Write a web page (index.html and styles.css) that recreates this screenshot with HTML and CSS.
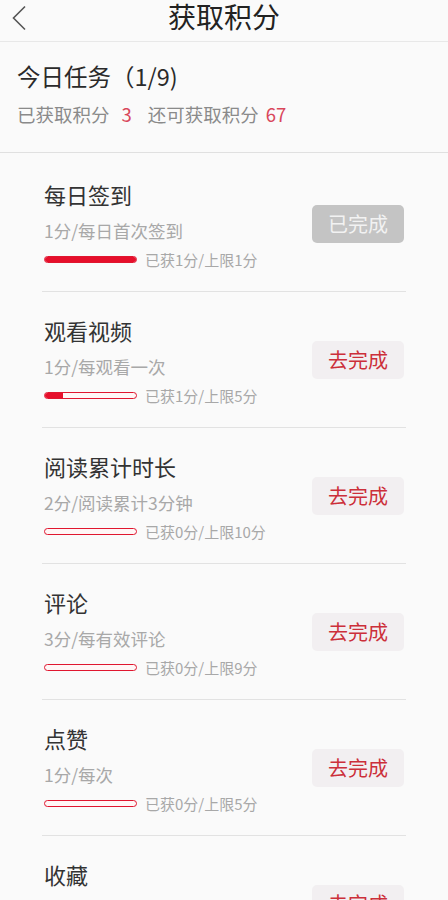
FILE: index.html
```html
<!DOCTYPE html>
<html>
<head>
    <meta charset="utf-8">
    <title>获取积分</title>
    <link rel="stylesheet" href="styles.css">
</head>
<body>
<div class="header">
    <svg class="back" width="16" height="26" viewBox="0 0 16 26">
        <path d="M14 1.5 L2.5 13 L14 24.5" fill="none" stroke="#555" stroke-width="1.6"/>
    </svg>
    <h1>获取积分</h1>
</div>

<div class="summary">
    <div class="summary-title">今日任务（1/9)</div>
    <div class="summary-sub">
        <span>已获取积分</span><span class="num">3</span>
        <span class="second">还可获取积分</span><span class="num tight">67</span>
    </div>
</div>

<div class="tasks">
    <div class="task">
        <div class="task-info">
            <div class="task-name">每日签到</div>
            <div class="task-rule">1分/每日首次签到</div>
            <div class="task-progress">
                <div class="bar"><div class="fill" style="width:100%"></div></div>
                <span class="bar-text">已获1分/上限1分</span>
            </div>
        </div>
        <button class="btn done">已完成</button>
    </div>
    <div class="task">
        <div class="task-info">
            <div class="task-name">观看视频</div>
            <div class="task-rule">1分/每观看一次</div>
            <div class="task-progress">
                <div class="bar"><div class="fill" style="width:20%"></div></div>
                <span class="bar-text">已获1分/上限5分</span>
            </div>
        </div>
        <button class="btn">去完成</button>
    </div>
    <div class="task">
        <div class="task-info">
            <div class="task-name">阅读累计时长</div>
            <div class="task-rule">2分/阅读累计3分钟</div>
            <div class="task-progress">
                <div class="bar"><div class="fill" style="width:0%"></div></div>
                <span class="bar-text">已获0分/上限10分</span>
            </div>
        </div>
        <button class="btn">去完成</button>
    </div>
    <div class="task">
        <div class="task-info">
            <div class="task-name">评论</div>
            <div class="task-rule">3分/每有效评论</div>
            <div class="task-progress">
                <div class="bar"><div class="fill" style="width:0%"></div></div>
                <span class="bar-text">已获0分/上限9分</span>
            </div>
        </div>
        <button class="btn">去完成</button>
    </div>
    <div class="task">
        <div class="task-info">
            <div class="task-name">点赞</div>
            <div class="task-rule">1分/每次</div>
            <div class="task-progress">
                <div class="bar"><div class="fill" style="width:0%"></div></div>
                <span class="bar-text">已获0分/上限5分</span>
            </div>
        </div>
        <button class="btn">去完成</button>
    </div>
    <div class="task">
        <div class="task-info">
            <div class="task-name">收藏</div>
            <div class="task-rule">1分/每次收藏</div>
            <div class="task-progress">
                <div class="bar"><div class="fill" style="width:0%"></div></div>
                <span class="bar-text">已获0分/上限5分</span>
            </div>
        </div>
        <button class="btn">去完成</button>
    </div>
</div>
</body>
</html>
```

FILE: styles.css
```css
body {
    margin: 0;
    background-color: #fafafa;
    font-family: "Noto Sans CJK SC", "Noto Sans", sans-serif;
    color: #333;
    width: 448px;
    overflow: hidden;
}
.header {
    height: 41px;
    border-bottom: 1px solid #e8e8e8;
    display: flex;
    justify-content: center;
    position: relative;
}
.back {
    position: absolute;
    left: 11px;
    top: 5px;
}
.header h1 {
    margin: 0;
    font-size: 28px;
    font-weight: normal;
    line-height: 33px;
    color: #222;
}
.summary {
    padding: 18px 17px 25px;
    border-bottom: 1px solid #e0e0e0;
}
.summary-title {
    font-size: 23.5px;
    line-height: 32px;
    color: #2a2a2a;
}
.summary-sub {
    margin-top: 9px;
    font-size: 18.5px;
    line-height: 26px;
    color: #8a8a8a;
    display: flex;
}
.num {
    color: #d9475a;
    margin-left: 12px;
}
.num.tight {
    margin-left: 7px;
}
.second {
    margin-left: 16px;
}
.tasks {
    margin: 0 42px;
    padding-top: 3px;
}
.task {
    display: flex;
    align-items: center;
    justify-content: space-between;
    height: 135px;
    padding: 0 2px 0 2px;
    border-bottom: 1px solid #e2e2e2;
}
.task-info {
    display: flex;
    flex-direction: column;
}
.task-name {
    font-size: 22px;
    line-height: 30px;
    color: #333;
}
.task-rule {
    margin-top: 10px;
    font-size: 17.5px;
    line-height: 24px;
    color: #a8a8a8;
}
.task-progress {
    margin-top: 8px;
    height: 18px;
    display: flex;
    align-items: center;
    gap: 8px;
}
.bar {
    width: 93px;
    height: 7px;
    box-sizing: border-box;
    border: 1px solid #e0162f;
    border-radius: 4px;
    background-color: #fff6f6;
    overflow: hidden;
}
.fill {
    height: 100%;
    background-color: #e60f2b;
}
.bar-text {
    font-size: 15px;
    color: #a8a8a8;
}
.btn {
    width: 92px;
    height: 38px;
    border: none;
    border-radius: 5px;
    background-color: #f2eff1;
    color: #cc2f3a;
    font-family: "Noto Sans CJK SC", sans-serif;
    font-size: 20px;
    padding: 0;
}
.btn.done {
    background-color: #c4c4c4;
    color: #f2f2f2;
}
```
